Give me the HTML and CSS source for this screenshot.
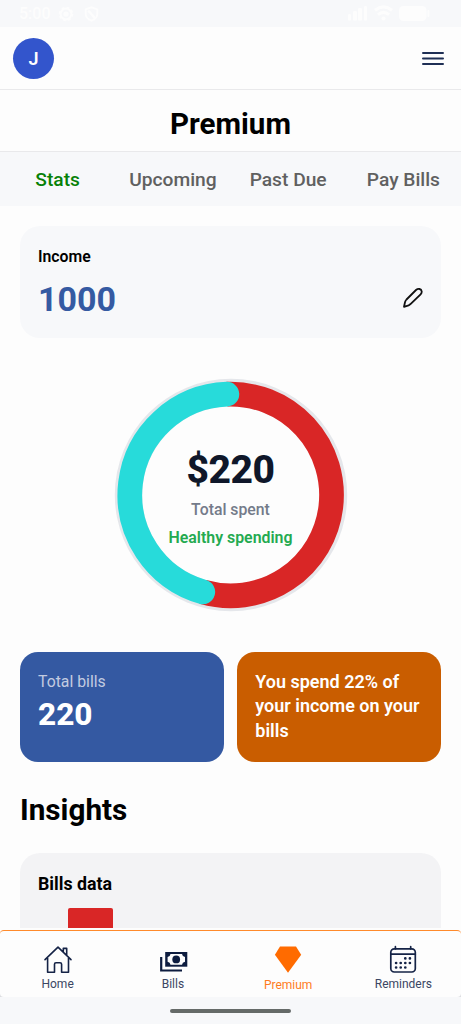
FILE: index.html
```html
<!DOCTYPE html>
<html lang="en">
<head>
<meta charset="utf-8">
<title>Premium</title>
<link rel="stylesheet" href="styles.css">
</head>
<body>
<div class="app">
  <div class="status">
    <span class="time">5:00</span>
    <svg class="status-gear" width="16" height="16" viewBox="0 0 16 16"><circle cx="8" cy="8" r="5.4" fill="none" stroke="#fdfdfd" stroke-width="2"/><circle cx="8" cy="8" r="6.4" fill="none" stroke="#fdfdfd" stroke-width="1.8" stroke-dasharray="2.6 2.4"/><circle cx="8" cy="8" r="2.6" fill="#fdfdfd"/></svg>
    <svg class="status-shield" width="15" height="16" viewBox="0 0 15 16"><path d="M7.5 1.3 13.3 3.4V8c0 3.200-2.500 5.500-5.800 6.700C4.200 13.500 1.700 11.200 1.700 8V3.400Z" fill="none" stroke="#fdfdfd" stroke-width="1.8"/><path d="M4.200 4.500 10.800 12" stroke="#fdfdfd" stroke-width="2.400"/></svg>
    <svg class="status-right" width="83" height="17" viewBox="0 0 83 17" fill="#fdfdfd"><rect x="0" y="9" width="3" height="6.500" rx="1"/><rect x="5" y="6" width="4" height="9.500" rx="1"/><rect x="10" y="3" width="4" height="12.500" rx="1"/><rect x="16" y="1" width="3" height="14.500" rx="1"/><path d="M27 5.200Q35.500-1.500 44 5.200M30 9.700Q35.500 5 41 9.700" fill="none" stroke="#fdfdfd" stroke-width="3"/><circle cx="35.500" cy="13.500" r="2"/><rect x="51" y="1" width="27.500" height="15" rx="4.500"/><rect x="79.500" y="5" width="1.800" height="7" rx=".9"/></svg>
  </div>
  <header class="header">
    <div class="avatar">J</div>
    <svg class="menu" width="24" height="18" viewBox="0 0 24 18" stroke="#1f2f55" stroke-width="2" stroke-linecap="round"><path d="M2 4H22M2 9.500H22M2 15H22"/></svg>
  </header>
  <h1 class="title">Premium</h1>
  <nav class="tabs"><span class="tab tab-active">Stats</span><span class="tab">Upcoming</span><span class="tab">Past Due</span><span class="tab">Pay Bills</span></nav>
  <main class="content">
    <section class="income">
      <div class="income-label">Income</div>
      <div class="income-row">
        <span class="income-value">1000</span>
        <svg class="pencil" width="20" height="20" viewBox="0 0 20 20" fill="none" stroke="#111" stroke-width="1.800" stroke-linejoin="round"><path d="M1 18.800 2 14.300Q2.400 12.700 3.500 11.500L13 2Q14.700.6 16.500 1 18.400 1.400 18.700 3.300 18.900 5 17.600 6.300L8 15.700Q7 16.800 5.600 17.400Z"/></svg>
      </div>
    </section>
    <section class="donut">
      <svg class="rings" viewBox="0 0 234 234" fill="none">
        <circle cx="117" cy="117" r="116.200" fill="#e5e7eb"/>
        <circle cx="117" cy="117" r="88.800" fill="#fdfdfd"/>
        <path d="M112.900 16.200A100.850 100.850 0 1 1 88.800 213.900" stroke="#d92626" stroke-width="24.700"/>
        <path d="M88.800 213.900A100.850 100.850 0 0 1 112.900 16.200" stroke="#27dbda" stroke-width="24.700" stroke-linecap="round"/>
      </svg>
      <div class="donut-text">
        <div class="amount">$220</div>
        <div class="spent">Total spent</div>
        <div class="healthy">Healthy spending</div>
      </div>
    </section>
    <section class="summary">
      <div class="box blue"><div class="box-label">Total bills</div><div class="box-value">220</div></div>
      <div class="box orange">You spend 22% of<br>your income on your<br>bills</div>
    </section>
    <h2 class="insights">Insights</h2>
    <section class="bills"><div class="bills-title">Bills data</div><div class="bar"></div></section>
  </main>
  <nav class="bottom">
    <div class="bottom-nav">
      <div class="item"><svg width="30" height="30" viewBox="0 0 30 30" fill="none" stroke="#152346" stroke-width="1.600" stroke-linejoin="round" stroke-linecap="round"><path d="M2 14.600 15 2.200 28 14.600M4.600 13V27.200H11.500V19.300Q11.500 17.700 13 17.700H17Q18.600 17.700 18.600 19.300V27.200H25.500V13M20.300 7V3.400H23.700V10"/></svg><span>Home</span></div>
      <div class="item"><svg width="30" height="30" viewBox="0 0 30 30"><path d="M7.200 7H29.300V21.700H7.200Z" fill="#0d1c3f"/><path d="M12.500 9H24Q24.300 11.500 27 12V16.800Q24.300 17.200 24 19.800H12.500Q12.200 17.200 9.600 16.800V12Q12.200 11.500 12.500 9Z" fill="#fdfdfd"/><circle cx="18.200" cy="14.400" r="3.900" fill="#0d1c3f"/><path d="M3.200 12V25.500H24" fill="none" stroke="#0d1c3f" stroke-width="2.200"/></svg><span>Bills</span></div>
      <div class="item item-active"><svg width="30" height="30" viewBox="0 0 30 30"><path d="M7 1.500H23L28.200 9.700 15 27.800 1.900 9.700Z" fill="#ff6b00"/></svg><span>Premium</span></div>
      <div class="item"><svg width="30" height="30" viewBox="0 0 30 30" fill="none" stroke="#152346" stroke-width="1.700"><rect x="2.800" y="3.800" width="24.500" height="23.200" rx="3.500"/><path d="M2.800 9.200H27.300M7.400 1.700V4M22.700 1.700V4" stroke-linecap="round"/><path d="M17.300 13.400h.01M21.900 13.400h.01M8.100 18h.01M12.700 18h.01M17.300 18h.01M21.900 18h.01M8.100 22.500h.01M12.700 22.500h.01M17.300 22.500h.01" stroke-width="2.700" stroke-linecap="round"/></svg><span>Reminders</span></div>
    </div>
  </nav>
  <div class="gesture"><div class="handle"></div></div>
</div>
</body>
</html>
```

FILE: styles.css
```css
* { box-sizing: border-box; }
body { margin: 0; background: #fdfdfd; font-family: Roboto, sans-serif; color: #000; }
.app { width: 461px; height: 1024px; display: flex; flex-direction: column; overflow: hidden; }
.status { height: 27px; flex: none; background: #f7f8fa; display: flex; align-items: center; padding-left: 19px; }
.time { width: 30px; font-size: 16px; font-weight: 500; line-height: 27px; color: #fdfdfd; white-space: nowrap; }
.status-gear { margin-left: 9px; }
.status-shield { margin-left: 10px; }
.status-right { margin-left: auto; margin-right: 30px; }
.header { height: 63px; flex: none; border-bottom: 1.5px solid #e9e9eb; display: flex; align-items: center; justify-content: space-between; padding: 0 16px 0 13px; }
.avatar { width: 41px; height: 41px; border-radius: 50%; background: #3355cc; color: #fff; font-size: 18px; font-weight: 600; line-height: 42px; text-align: center; }
.title { height: 62px; flex: none; margin: 0; border-bottom: 1px solid #e9e9eb; font-size: 29.500px; line-height: 68px; font-weight: 700; text-align: center; }
.tabs { height: 54px; flex: none; background: #f7f8fa; display: grid; grid-template-columns: repeat(4, 1fr); }
.tab { text-align: center; white-space: nowrap; font-size: 19.200px; line-height: 56px; font-weight: 500; color: #606060; }
.tab-active { color: #078107; }
.content { flex: 1; min-height: 0; overflow: hidden; padding: 20px 20px 0; }
.income { height: 111.500px; background: #f7f8fa; border-radius: 20px; padding: 18px; }
.income-label { font-size: 15.800px; line-height: 25px; font-weight: 600; }
.income-row { display: flex; justify-content: space-between; align-items: center; height: 59px; }
.income-value { font-size: 34px; line-height: 58px; font-weight: 700; color: #355aa2; }
.pencil { margin-top: -2px; }
.donut { width: 234px; height: 234px; margin: 40px auto 0; display: grid; }
.rings, .donut-text { grid-area: 1 / 1; }
.rings { width: 234px; height: 234px; }
.donut-text { text-align: center; padding-top: 67px; }
.amount { font-size: 39px; line-height: 51px; font-weight: 800; letter-spacing: -.5px; color: #0f172a; }
.spent { font-size: 15.800px; line-height: 28px; font-weight: 500; color: #747b8a; }
.healthy { font-size: 15.900px; line-height: 28px; font-weight: 600; color: #24aa50; }
.summary { display: grid; grid-template-columns: 1fr 1fr; gap: 13.500px; margin-top: 40px; }
.box { height: 110px; border-radius: 18px; padding: 18px; color: #fff; }
.blue { background: #3459a2; }
.box-label { font-size: 15.800px; line-height: 24px; color: #c2cbe0; }
.box-value { font-size: 31.500px; line-height: 41px; font-weight: 800; }
.orange { background: #c95d00; font-size: 18px; line-height: 24.700px; font-weight: 600; white-space: nowrap; }
.insights { margin: 28px 0 0; font-size: 29.700px; line-height: 40px; font-weight: 700; }
.bills { height: 180px; margin-top: 23px; border-radius: 20px; background: #f3f3f5; padding: 18px; }
.bills-title { font-size: 17.800px; line-height: 26px; font-weight: 700; }
.bar { width: 45px; height: 130px; margin: 11.500px 0 0 30px; border-radius: 2px 2px 0 0; background: #d92626; }
.bottom { height: 69px; flex: none; padding-top: 2px; background: linear-gradient(#fdfdfd 40px, #dcdde0); }
.bottom-nav { height: 67px; display: grid; grid-template-columns: repeat(4, 1fr); background: #fdfdfd; border-top: 1px solid #ff8a2b; border-radius: 4px; padding-top: 14px; }
.item { display: flex; flex-direction: column; align-items: center; font-size: 12px; line-height: 19px; color: #3b4663; }
.item svg { display: block; }
.item-active { color: #ff7b1c; line-height: 21px; }
.gesture { height: 27px; flex: none; background: #f7f8fa; display: flex; justify-content: center; padding-top: 12px; }
.handle { width: 121px; height: 4px; border-radius: 2px; background: #656a68; }
```
